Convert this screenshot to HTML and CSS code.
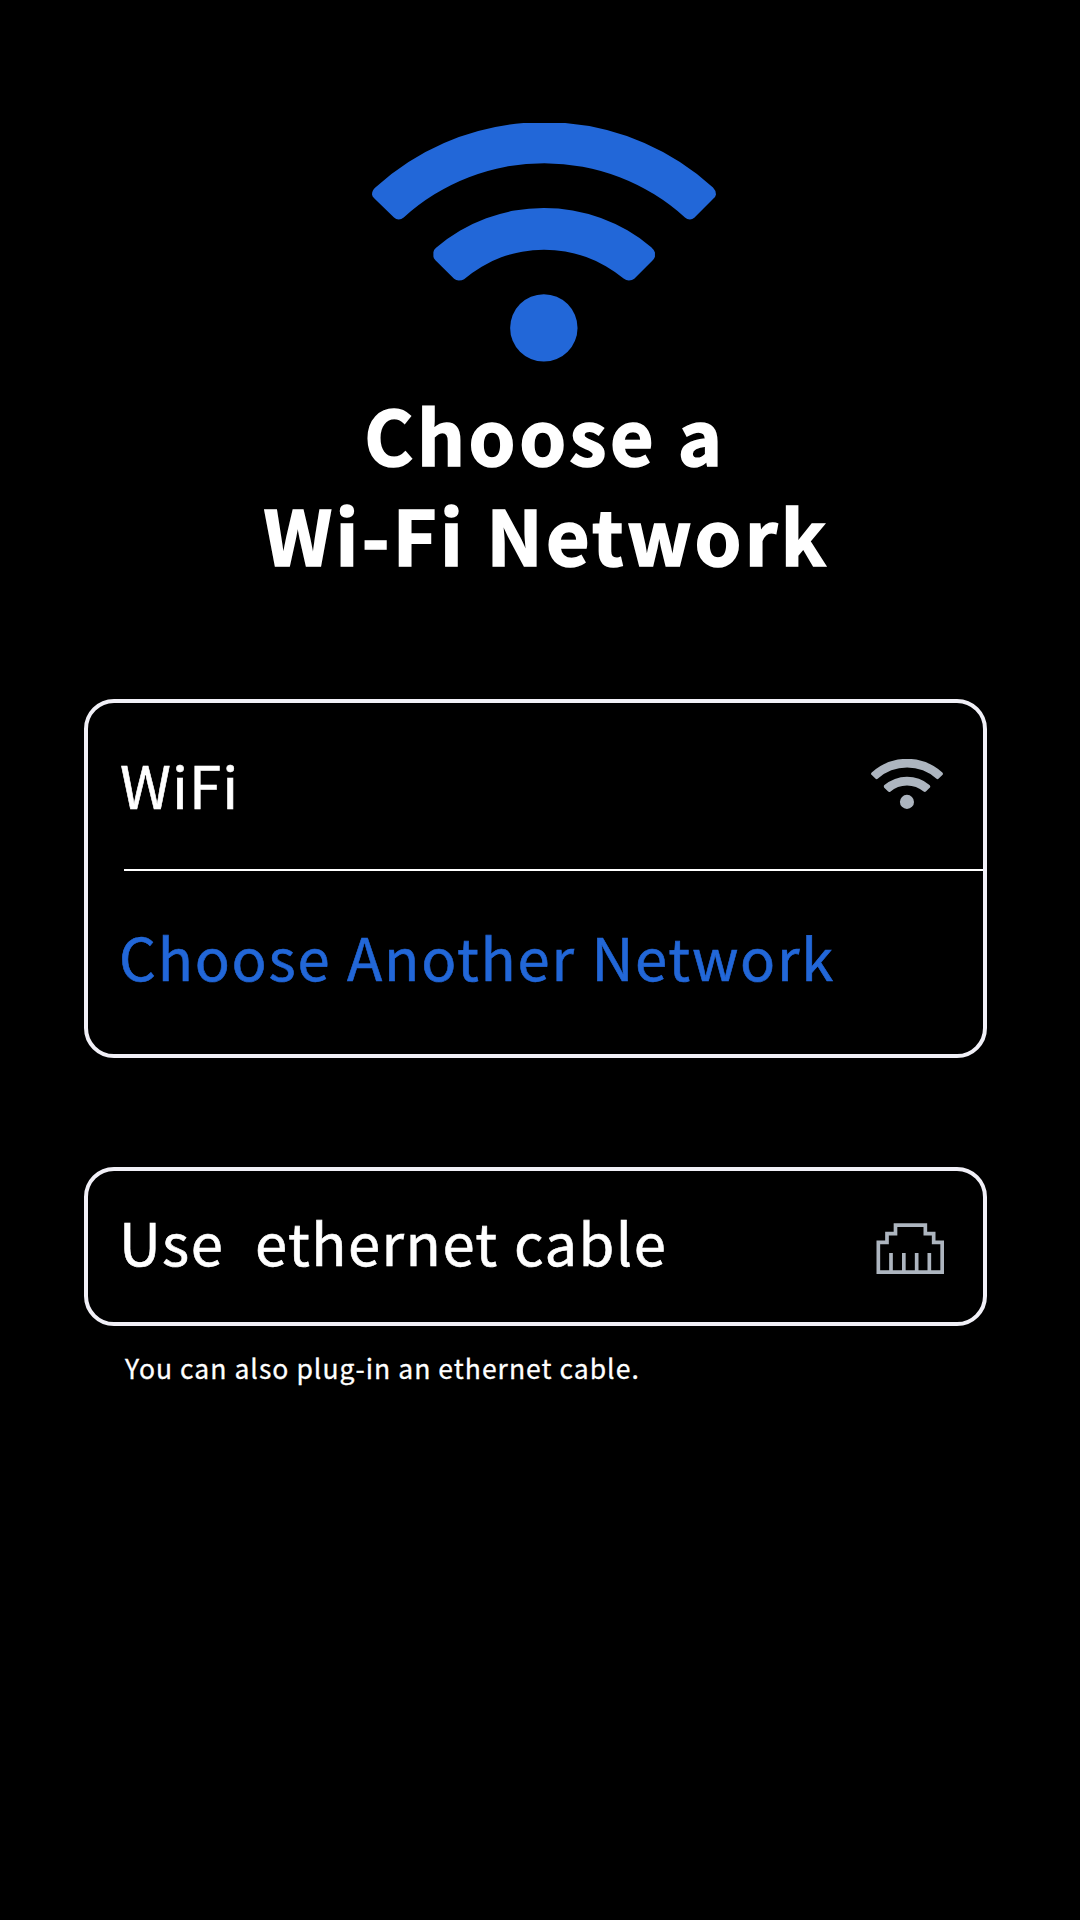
FILE: index.html
```html
<!DOCTYPE html>
<html lang="en">
<head>
<meta charset="utf-8">
<title>Choose a Wi-Fi Network</title>
<link rel="stylesheet" href="styles.css">
</head>
<body>
<main class="screen">
  <header class="hero">
    <svg class="hero-icon" viewBox="36 39 1031 716" aria-hidden="true">
      <g id="wifi" fill="currentColor">
        <path d="M36 253 Q36 241 46 232 A750 750 0 0 1 490 39 H615 A750 750 0 0 1 1058 232 Q1067 241 1067 253 Q1066 260 1058 267 L1002 323 Q996 328 989 328 Q980 328 974 322 A627 627 0 0 0 131 322 Q124 328 116 328 Q108 328 102 322 L44 266 Q36 258 36 253Z"/>
        <path d="M220 439 V426 Q220 420 228 413 A498 498 0 0 1 873 411 Q880 417 884 427 V440 Q882 446 876 452 L822 506 Q816 511 806 511 Q798 511 790 505 A370 370 0 0 0 312 507 Q306 511 296 511 Q288 511 282 506 L226 450 Q220 444 220 439Z"/>
        <circle cx="551" cy="653" r="101"/>
      </g>
    </svg>
    <h1 class="title"><span class="title-top">Choose a</span><span class="title-bottom">Wi-Fi Network</span></h1>
  </header>
  <section class="card networks">
    <div class="row row-wifi">
      <span class="label label-wifi">WiFi</span>
      <svg class="wifi-icon" viewBox="36 39 1031 716" aria-hidden="true"><use href="#wifi"/></svg>
    </div>
    <div class="row row-other"><span class="label label-other">Choose Another Network</span></div>
  </section>
  <section class="card ethernet">
    <span class="label label-cable">Use  ethernet cable</span>
    <svg class="ethernet-icon" viewBox="108 219 204 153" aria-hidden="true">
      <path d="M115 366.500V277H141V251H166.500V225.500H256V251H281V277H306.500V366.500Z M153 309V366 M191.500 309V366 M230 309V366 M268 309V366"/>
    </svg>
  </section>
  <p class="note">You can also plug-in an ethernet cable.</p>
</main>
</body>
</html>
```
FILE: styles.css
```css
* { box-sizing: border-box; }
body {
  margin: 0;
  background: #000;
  color: #fff;
  font-family: "Noto Sans CJK JP", "Noto Sans", sans-serif;
}
.screen {
  display: flex;
  flex-direction: column;
  width: 1080px;
  min-height: 1920px;
  padding: 123px 93px 0 84px;
}
.hero {
  display: flex;
  flex-direction: column;
  align-items: center;
  height: 576px;
  padding-left: 16px;
}
.hero-icon { width: 344px; height: 239px; color: #2267d8; }
.title {
  display: flex;
  flex-direction: column;
  align-items: center;
  margin: 22px 0 0;
  font-size: 75px;
  line-height: 100px;
  font-weight: 700;
  white-space: nowrap;
  -webkit-text-stroke: 1.600px currentColor;
}
.title-top { padding-left: 3px; letter-spacing: 3.600px; }
.title-bottom { padding-left: 6px; letter-spacing: 3.350px; }
.card { border: 4px solid #f1f0f7; border-radius: 30px; }
.networks { height: 358.500px; padding-left: 36px; }
.row { display: flex; align-items: center; justify-content: space-between; }
.row-wifi {
  height: 168px;
  padding: 0 40px 4px 0;
  border-bottom: 2px solid #fff;
}
.row-other { height: 170px; }
.label {
  margin-left: -4px;
  font-size: 58px;
  line-height: 80px;
  white-space: pre;
  -webkit-text-stroke: 0.600px currentColor;
}
.label-wifi { letter-spacing: 1.100px; }
.label-other { margin-left: -5px; color: #2267d8; letter-spacing: 1.750px; word-spacing: 1px; }
.label-cable { padding-bottom: 12px; margin-left: -5px; letter-spacing: 1.450px; word-spacing: 1px; }
.wifi-icon { width: 72px; height: 50px; color: #adb5bf; }
.ethernet {
  display: flex;
  align-items: center;
  justify-content: space-between;
  height: 159px;
  margin-top: 109.500px;
  padding: 0 39px 0 36px;
}
.ethernet-icon {
  width: 68px;
  height: 51px;
  margin-top: 4px;
  fill: none;
  stroke: #adb5bf;
  stroke-width: 11;
}
.note {
  margin: 22px 0 0 41px;
  font-size: 26.500px;
  line-height: 40px;
  letter-spacing: 1.030px;
  white-space: nowrap;
  -webkit-text-stroke: 0.300px currentColor;
}
```
